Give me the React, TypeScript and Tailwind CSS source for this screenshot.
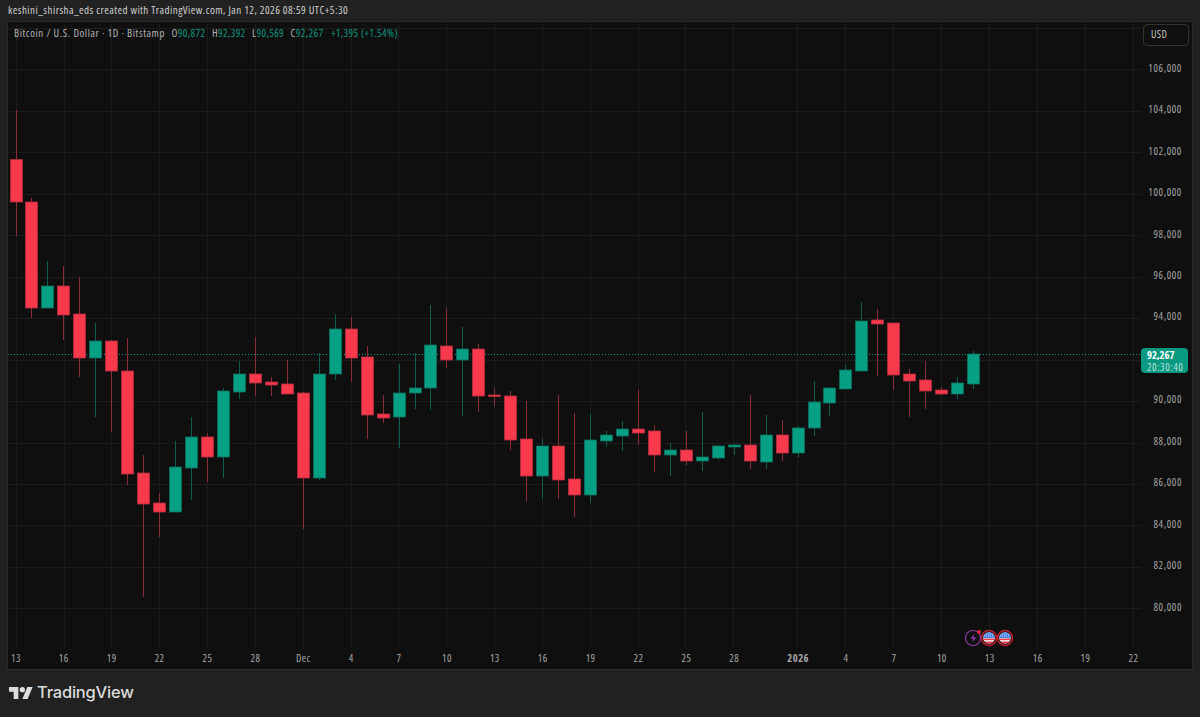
import * as React from 'react'

// [high wick, body top, body bottom, low wick, direction], in page pixels
type Candle = [number, number, number, number, 'u' | 'd']

const candles: Candle[] = [
  [110, 159.5, 202, 236, 'd'], [198, 202, 308, 318, 'd'], [261, 286, 308, 308, 'u'], [266, 286, 315, 340, 'd'],
  [277, 314, 358, 377, 'd'], [323, 341, 358, 417, 'u'], [340, 341, 371, 432, 'd'], [338, 371, 474, 485, 'd'],
  [455, 473, 504, 597, 'd'], [493, 503, 512, 537, 'd'], [441, 467, 512, 512, 'u'], [417, 437, 468, 500, 'u'],
  [433, 437, 457, 482, 'd'], [388, 391, 457, 478, 'u'], [361, 374, 392, 399, 'u'], [337, 374, 383, 396, 'd'],
  [377, 382, 385, 396, 'd'], [360, 384, 394, 394, 'd'], [392, 393, 478, 529, 'd'], [353, 374, 478, 480, 'u'],
  [314, 329, 374, 380, 'u'], [317, 329, 358, 382, 'd'], [346, 357, 415, 439, 'd'], [395, 414, 418, 423, 'd'],
  [364, 393, 417, 448, 'u'], [353, 388, 393, 409, 'u'], [305, 345, 388, 410, 'u'], [308, 346, 360, 368, 'd'],
  [327, 349, 360, 416, 'u'], [344, 349, 396, 412, 'd'], [388, 395, 396.5, 406, 'd'], [391, 396, 440, 450, 'd'],
  [401, 439, 476, 502, 'd'], [439, 446, 476, 499, 'u'], [395, 446, 480, 499, 'd'], [413, 479, 495, 517, 'd'],
  [414, 440, 495, 503, 'u'], [431, 435, 441, 447, 'u'], [421, 429, 436, 451, 'u'], [390, 429, 433, 445, 'd'],
  [425, 431, 455, 472, 'd'], [443, 450, 455, 476, 'u'], [431, 450, 461, 465, 'd'], [412, 457, 461, 471, 'u'],
  [445, 446, 458, 460, 'u'], [443, 445, 447, 455, 'u'], [395, 445, 461, 469, 'd'], [415, 435, 462, 469, 'u'],
  [420, 435, 453, 461, 'd'], [426, 428, 453, 457, 'u'], [381, 402, 428, 436, 'u'], [387, 388, 403, 416, 'u'],
  [365, 370, 389, 389, 'u'], [302, 321, 371, 371, 'u'], [309, 320, 324, 376, 'd'], [323, 323, 375, 390, 'd'],
  [369, 374, 381, 417, 'd'], [361, 380, 391, 409, 'd'], [387, 390, 394, 395, 'd'], [377, 383, 394, 399, 'u'],
  [351, 354, 384, 389, 'u'],
]

const priceLabels = ['106,000', '104,000', '102,000', '100,000', '98,000', '96,000', '94,000', '92,000', '90,000', '88,000', '86,000', '84,000', '82,000', '80,000']

const gridX = [16, 64, 111, 159, 207, 255, 303, 351, 398, 446, 494, 542, 590, 638, 685, 733, 797, 845, 893, 941, 989, 1037, 1085, 1133]
const timeLabels = ['13', '16', '19', '22', '25', '28', 'Dec', '4', '7', '10', '13', '16', '19', '22', '25', '28', '2026', '4', '7', '10', '13', '16', '19', '22']

const ohlc = [
  ['O', '90,872'],
  ['H', '92,392'],
  ['L', '90,569'],
  ['C', '92,267'],
]

function CandleChart() {
  return (
    <svg className="block h-[626px] w-[1133px]" viewBox="8 22 1133 626">
      {gridX.map((x, i) => (
        <line key={i} x1={x + 0.5} x2={x + 0.5} y1={22} y2={648} stroke="#1c1c1c" />
      ))}
      {Array.from({ length: 15 }).map((_, i) => {
        const y = Math.round(28 + 41.45 * i) + 0.5
        return <line key={i} x1={8} x2={1141} y1={y} y2={y} stroke="#1c1c1c" />
      })}
      <line x1={8} x2={1141} y1={354.5} y2={354.5} stroke="#089981" strokeDasharray="1 2" />
      {candles.map(([high, top, bottom, low, dir], i) => {
        const x = Math.round(15.5 + 15.96 * i) + 0.5
        const up = dir === 'u'
        return (
          <g key={i}>
            <line x1={x} x2={x} y1={high} y2={low} stroke={up ? '#0a5f50' : '#8f2a38'} />
            <rect
              x={x - 6}
              y={top}
              width={12}
              height={bottom - top}
              fill={up ? '#08a084' : '#f7394c'}
              stroke={up ? '#0b6f5c' : '#b32f3d'}
              strokeWidth={0.75}
            />
          </g>
        )
      })}
    </svg>
  )
}

function EventMarkers() {
  const flag = (cx: number) => (
    <g key={cx}>
      <circle cx={cx} cy={10} r={7.5} fill="#0f0f0f" stroke="#c3202e" strokeWidth={1.5} />
      <clipPath id={`flag-${cx}`}>
        <circle cx={cx} cy={10} r={5.8} />
      </clipPath>
      <g clipPath={`url(#flag-${cx})`}>
        <rect x={cx - 6} y={4} width={12} height={12} fill="#f5f0f0" />
        <rect x={cx - 6} y={10.5} width={12} height={1.6} fill="#e8424f" />
        <rect x={cx - 6} y={13.5} width={12} height={2.5} fill="#e8424f" />
        <rect x={cx - 6} y={4} width={12} height={6} fill="#4a86ec" />
        <line x1={cx - 5} x2={cx + 5} y1={6} y2={6} stroke="#dbe7fb" strokeWidth={0.8} strokeDasharray="1 1" />
        <line x1={cx - 5} x2={cx + 5} y1={8} y2={8} stroke="#dbe7fb" strokeWidth={0.8} strokeDasharray="1 1" />
      </g>
    </g>
  )
  return (
    <svg className="absolute left-[956px] top-[606px] h-[20px] w-[52px]" viewBox="0 0 52 20">
      <circle cx={9} cy={10} r={7.5} fill="none" stroke="#8e3aa5" strokeWidth={1.2} />
      <path d="M10.6 5.6 6.4 10.8h2.8l-1 3.6 4.2-5.2H9.6z" fill="#8e3aa5" />
      <circle cx={15} cy={4} r={2} fill="#d92a3a" />
      {flag(25)}
      {flag(41)}
    </svg>
  )
}

export default function App() {
  return (
    <div className="flex h-[717px] w-[1200px] flex-col overflow-hidden bg-[#212121] font-['Open_Sans',sans-serif] font-stretch-[75%]">
      <div className="flex h-[21px] items-center pl-[8px] text-[11px] tracking-[0.45px] text-[#d0d0d0]">
        keshini_shirsha_eds created with TradingView.com, Jan 12, 2026 08:59 UTC+5:30
      </div>

      <div className="relative mx-[7px] flex h-[649px] flex-col overflow-hidden border border-[#2b2b2b] bg-[#0f0f0f]">
        <div className="flex h-[626px]">
          <CandleChart />
          <div className="flex flex-1 flex-col pt-[2px]">
            <div className="ml-[2px] flex h-[22px] w-[46px] items-center rounded border border-[#333333] pl-[7px] text-[10.5px] tracking-[0.4px] text-[#c4c4c4]">
              USD
            </div>
            <div className="mt-[2px] flex flex-col">
              {priceLabels.map((p) => (
                <div key={p} className="flex h-[41.45px] items-center justify-end pr-[10px] text-[10.5px] tracking-[0.65px] text-[#a8a8a8]">
                  {p}
                </div>
              ))}
            </div>
          </div>
        </div>

        <div className="-ml-[16px] flex h-[21px] items-center pt-[1px] text-[10.5px] tracking-[0.5px] text-[#a8a8a8]">
          {timeLabels.map((t, i) => (
            <div
              key={i}
              className={
                t === '2026'
                  ? 'ml-[16px] flex w-[47.9px] justify-center font-bold'
                  : 'flex w-[47.9px] justify-center'
              }
            >
              {t}
            </div>
          ))}
        </div>

        {/* Legend */}
        <div className="absolute left-[6px] top-[3px] flex gap-[6.5px] text-[10.8px] tracking-[0.38px] text-[#b4b4b4]">
          <span className="tracking-[0.6px]">Bitcoin / U.S. Dollar · 1D · Bitstamp</span>
          {ohlc.map(([label, value]) => (
            <span key={label}>
              {label}
              <span className="text-[#089981]">{value}</span>
            </span>
          ))}
          <span className="ml-[1px] text-[#089981]">+1,395 (+1.54%)</span>
        </div>

        {/* Last price tag */}
        <div className="absolute left-[1133px] top-[326px] flex h-[25px] w-[47px] flex-col items-start justify-center rounded-sm bg-[#089981] pl-[6px] text-[10.5px] leading-[12px]">
          <span className="font-bold text-white">92,267</span>
          <span className="tracking-[0.6px] text-[#b9e3da]">20:30:40</span>
        </div>

        <EventMarkers />
      </div>

      <div className="flex flex-1 items-center gap-[4px] pb-[2px] pl-[9px]">
        <svg className="h-[14px] w-[24px]" viewBox="0 3 36 20" fill="#dcdcdc">
          <path d="M14 22H7V11H0V4h14v18zM28 22h-8l7.5-18h8L28 22z" />
          <circle cx="20" cy="8" r="4" />
        </svg>
        <span className="text-[16.5px] font-medium tracking-[-0.2px] text-[#dcdcdc] font-['Inter',sans-serif] font-stretch-normal">TradingView</span>
      </div>
    </div>
  )
}
